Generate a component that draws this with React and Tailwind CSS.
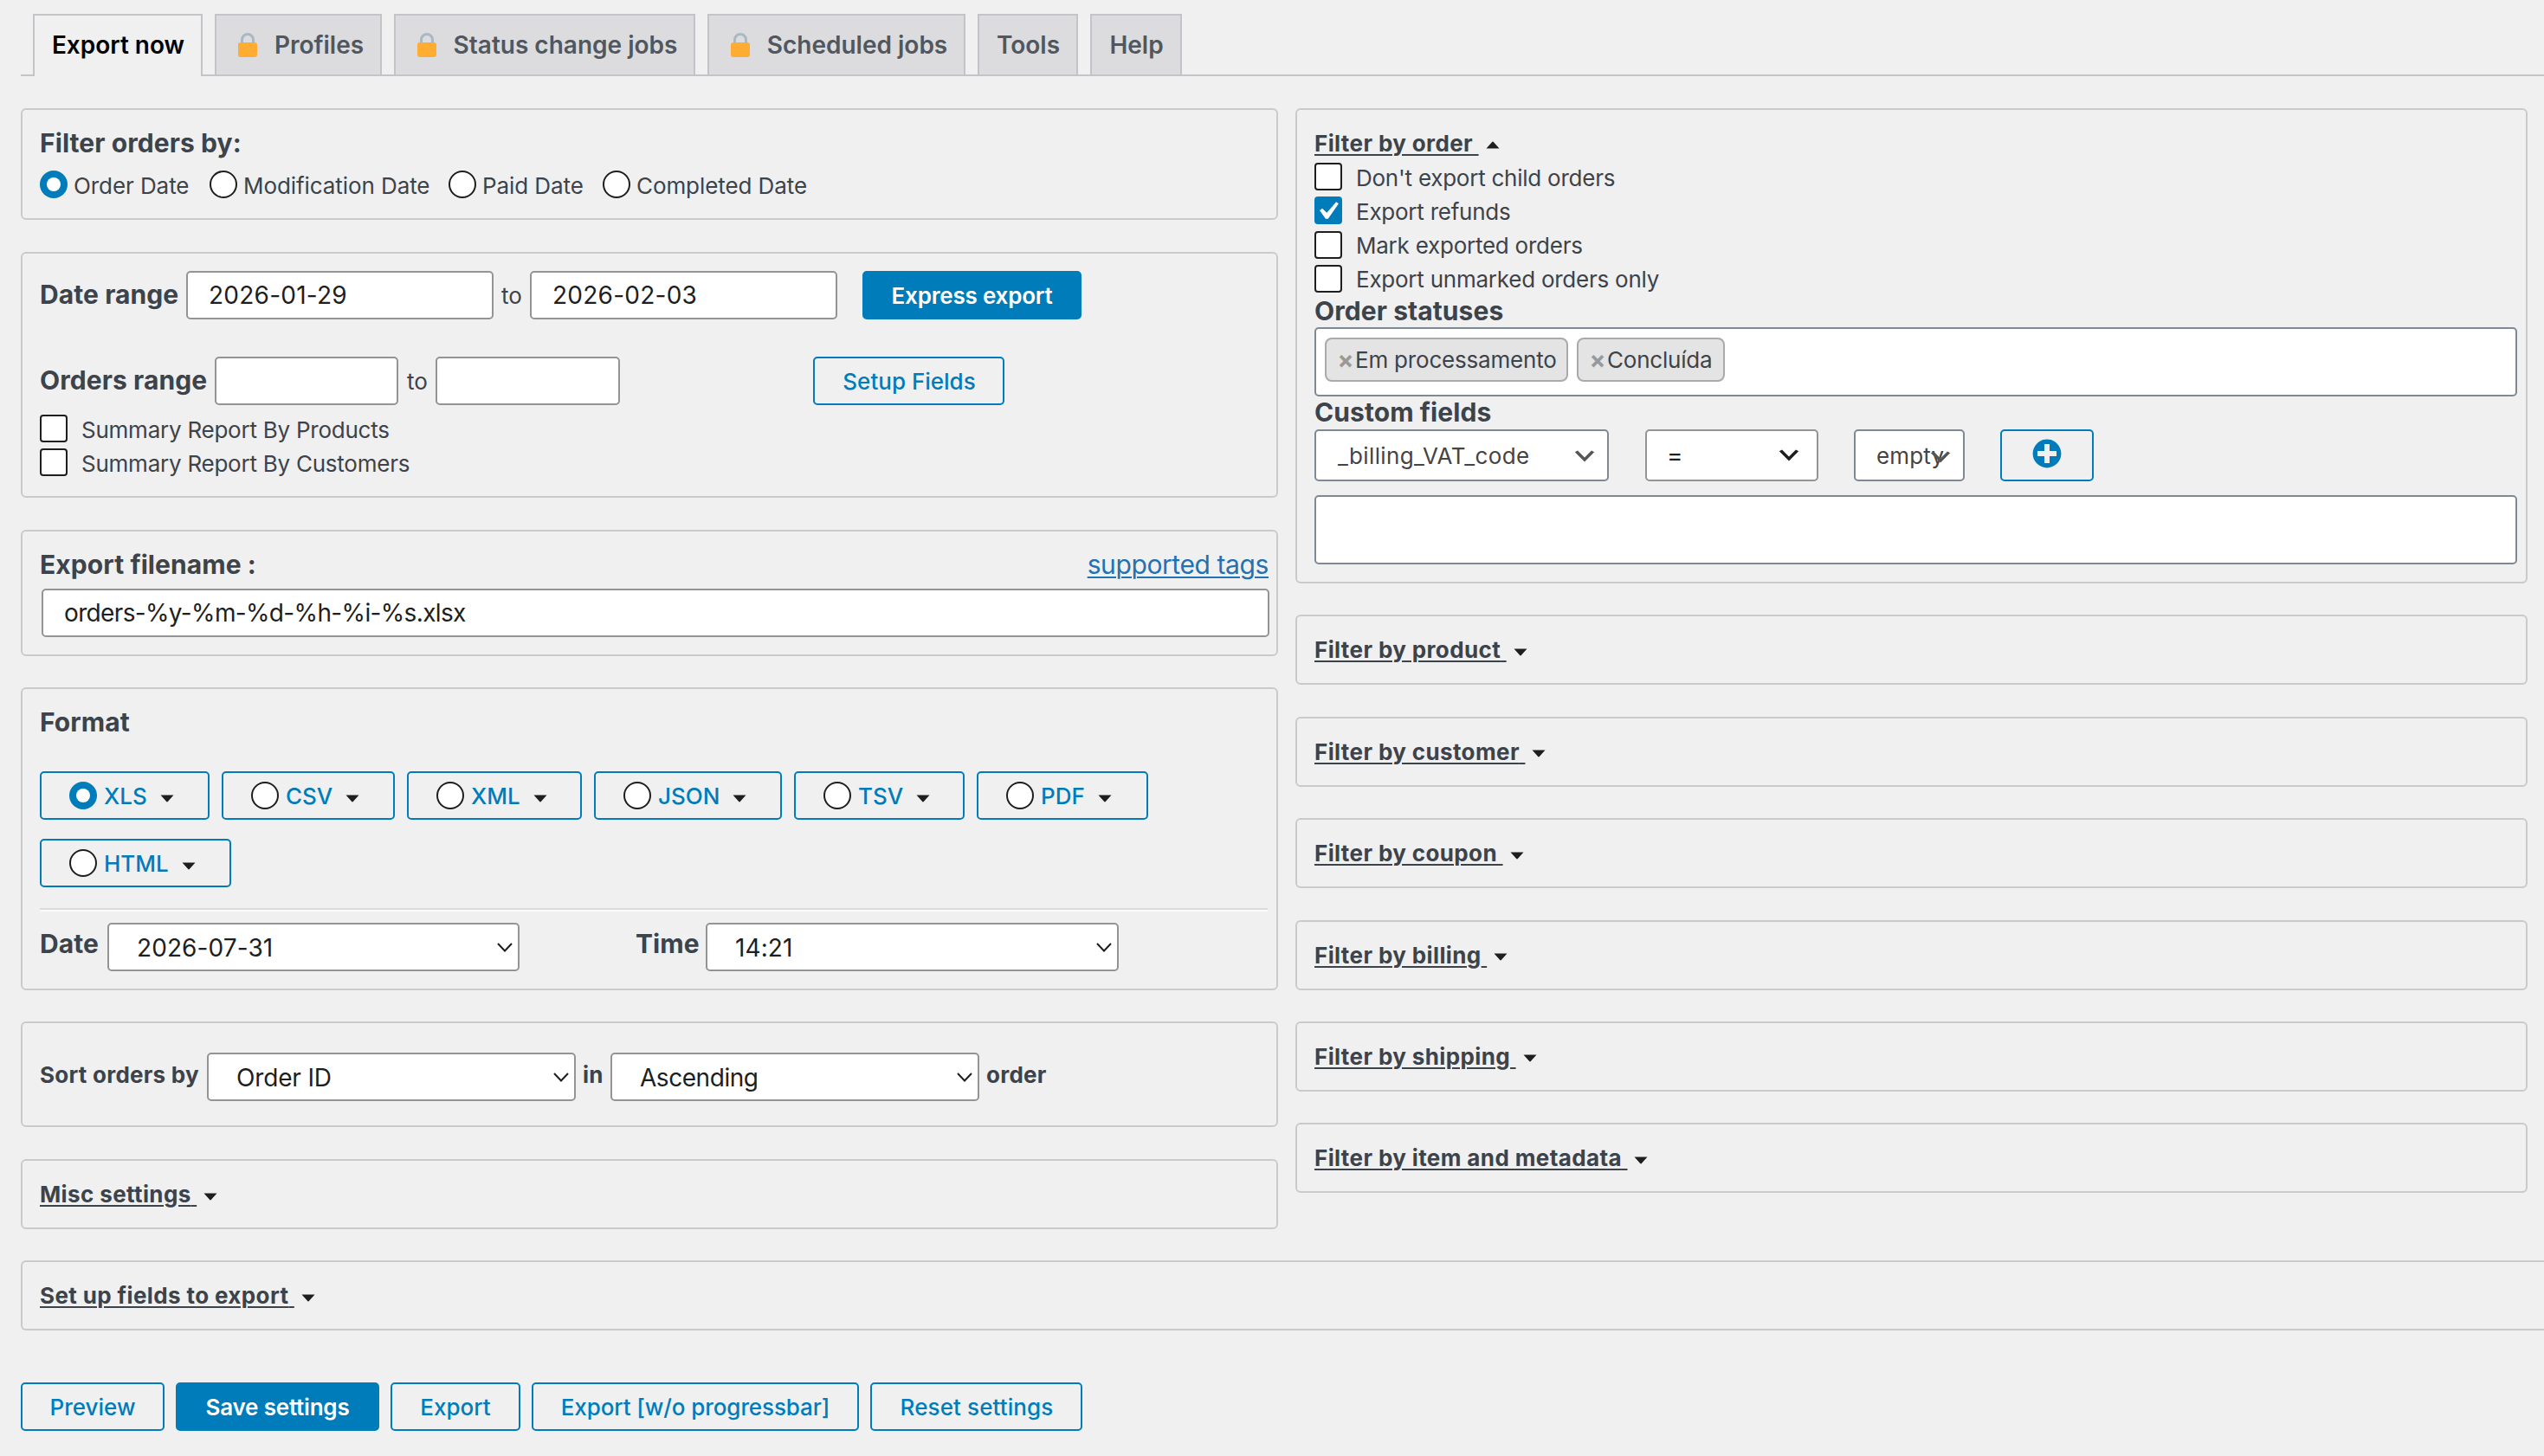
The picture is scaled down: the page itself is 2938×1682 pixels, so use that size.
import { useState } from 'react'
import clsx from 'clsx'

const tabs = [
  { name: 'Export now', width: 'w-[196px]' },
  { name: 'Profiles', width: 'w-[193px]', locked: true },
  { name: 'Status change jobs', width: 'w-[348px]', locked: true },
  { name: 'Scheduled jobs', width: 'w-[298px]', locked: true },
  { name: 'Tools', width: 'w-[116px]' },
  { name: 'Help', width: 'w-[106px]' },
]

const dateTypes = [
  { name: 'Order Date', width: 'w-[196px]' },
  { name: 'Modification Date', width: 'w-[276px]' },
  { name: 'Paid Date', width: 'w-[178px]' },
  { name: 'Completed Date', width: 'w-[260px]' },
]

const formats = [
  { name: 'XLS', width: 'w-[196px]' },
  { name: 'CSV', width: 'w-[200px]' },
  { name: 'XML', width: 'w-[202px]' },
  { name: 'JSON', width: 'w-[217px]' },
  { name: 'TSV', width: 'w-[197px]' },
  { name: 'PDF', width: 'w-[198px]' },
  { name: 'HTML', width: 'w-[221px]' },
]

const orderOptions = [
  "Don't export child orders",
  'Export refunds',
  'Mark exported orders',
  'Export unmarked orders only',
]

const filters = [
  'Filter by product',
  'Filter by customer',
  'Filter by coupon',
  'Filter by billing',
  'Filter by shipping',
  'Filter by item and metadata',
]

function Lock() {
  return (
    <svg className="mr-5 shrink-0" width="22" height="28" viewBox="0 0 22 28">
      <path d="M4.5 14V8a6.5 6.5 0 0 1 13 0v6" fill="none" stroke="#aab8c2" strokeWidth="3" />
      <rect y="11" width="22" height="17" rx="3" fill="#ffac33" />
    </svg>
  )
}

function Caret({ up, className }) {
  return (
    <svg className={clsx('shrink-0', className)} width="16" height="9" viewBox="0 0 16 9">
      <path d={up ? 'M0.5 8.5L7 1.2Q8 0 9 1.2L15.5 8.5z' : 'M0.5 0.5h15L9 7.8Q8 9 7 7.8z'} fill="#1e1e1e" />
    </svg>
  )
}

// thin arrow of the plain selects
function ThinChevron() {
  return (
    <svg width="18" height="11" viewBox="0 0 18 11">
      <path d="M1 1l8 8.5L17 1" fill="none" stroke="#1e1e1e" strokeWidth="2" />
    </svg>
  )
}

function ThickChevron({ className }) {
  return (
    <svg className={className} width="32" height="32" viewBox="0 0 20 20">
      <path d="M5 6l5 5 5-5 2 1-7 7-7-7 2-1z" fill="currentColor" />
    </svg>
  )
}

function Radio({ checked }) {
  return (
    <span
      className={clsx(
        'flex size-8 shrink-0 items-center justify-center rounded-full',
        checked ? 'bg-[#007cba]' : 'border-2 border-[#1e1e1e] bg-white'
      )}
    >
      {checked && <span className="size-4 rounded-full bg-white" />}
    </span>
  )
}

function Checkbox({ label, checked, onChange }) {
  return (
    <div className="flex h-8 items-center" onClick={onChange}>
      <span
        className={clsx(
          'size-8 shrink-0 overflow-hidden rounded-[4px]',
          checked ? 'bg-[#007cba]' : 'border-2 border-[#1e1e1e] bg-white'
        )}
      >
        {checked && (
          <svg width="32" height="32" viewBox="2.857 1.905 15.238 15.238">
            <path d="M14.83 4.89l1.34.94-5.81 8.38H9.02L5.78 9.67l1.34-1.25 2.57 2.4z" fill="#fff" />
          </svg>
        )}
      </span>
      <span className="ml-4 pt-[2px] tracking-[-0.24px]">{label}</span>
    </div>
  )
}

function Panel({ className, children }) {
  return <div className={clsx('rounded-[6px] border-2 border-[#cacaca]', className)}>{children}</div>
}

function Heading({ className, children }) {
  return <div className={clsx('text-[30px] font-bold tracking-[0.08px]', className)}>{children}</div>
}

function Toggle({ up, children }) {
  return (
    <div className="flex items-center">
      <span className="text-[26px] font-bold tracking-[0.38px] whitespace-pre underline decoration-2 underline-offset-[3px]">
        {children}{' '}
      </span>
      <Caret up={up} className="mt-[5px] ml-2" />
    </div>
  )
}

function Button({ primary, className, children }) {
  return (
    <button
      className={clsx(
        'flex items-center justify-center rounded-[5px] border-2 border-[#007cba] text-[26px] whitespace-nowrap',
        primary ? 'bg-[#007cba] font-semibold tracking-[-0.2px] text-white' : 'font-medium text-[#007cba]',
        className
      )}
    >
      {children}
    </button>
  )
}

function Input({ className, children }) {
  return (
    <div
      className={clsx(
        'flex h-14 items-center rounded-[5px] border-2 border-[#949494] bg-white pl-6 text-[28px] text-[#1e1e1e]',
        className
      )}
    >
      {children}
    </div>
  )
}

function Select({ className, children }) {
  return (
    <div
      className={clsx(
        'flex h-14 items-center justify-between rounded-[5px] border-2 border-[#949494] bg-white pr-[6px] pl-8 text-[28px] text-[#1e1e1e]',
        className
      )}
    >
      <span className="pt-[1px]">{children}</span>
      <ThinChevron />
    </div>
  )
}

function Tag({ className, children }) {
  return (
    <div className={clsx('flex h-[51px] items-center rounded-[8px] border-2 border-[#aaa] bg-[#e4e4e4] pl-[11px]', className)}>
      <span className="w-[22px] pt-[2px] text-center text-[28px] leading-none font-bold text-[#999]">×</span>
      <span className="tracking-[-0.2px]">{children}</span>
    </div>
  )
}

function App() {
  const [dateType, setDateType] = useState('Order Date')
  const [format, setFormat] = useState('XLS')
  const [checked, setChecked] = useState(['Export refunds'])

  const toggle = (name) => {
    setChecked(checked.includes(name) ? checked.filter((item) => item !== name) : [...checked, name])
  }

  return (
    <div className="h-[1682px] w-[2938px] overflow-hidden bg-[#f0f0f0] pl-6 font-[Inter,sans-serif] text-[26px] text-[#3c434a]">
      <div className="flex h-[88px] gap-[14px] border-b-2 border-[#c3c4c7] pt-4 pl-[14px]">
        {tabs.map((tab, index) => (
          <div
            key={tab.name}
            className={clsx(
              'flex items-center justify-center border-2 border-b-0 border-[#c3c4c7] text-[28px] font-semibold whitespace-nowrap',
              tab.width,
              index === 0 ? 'h-[72px] bg-[#f0f0f0] pb-[2px] text-black' : 'h-[70px] bg-[#dcdcde] text-[#50575e]',
              tab.locked ? 'pl-[6px]' : 'pl-[1px]'
            )}
          >
            {tab.locked && <Lock />}
            {tab.name}
          </div>
        ))}
      </div>

      <div className="mt-[37px] flex items-start">
        {/* left column */}
        <div className="w-[1452px]">
          <Panel className="h-[129px] pt-[18px] pl-5">
            <Heading className="leading-10">Filter orders by:</Heading>
            <div className="mt-3 flex h-8">
              {dateTypes.map((type) => (
                <div key={type.name} className={clsx('flex items-center', type.width)} onClick={() => setDateType(type.name)}>
                  <Radio checked={type.name === dateType} />
                  <span className="ml-[7px] pt-[3px] tracking-[-0.08px]">{type.name}</span>
                </div>
              ))}
            </div>
          </Panel>

          <Panel className="mt-[37px] h-[284px] pt-5 pl-5">
            <div className="flex items-center">
              <Heading className="w-[169px] pb-[1px]">Date range</Heading>
              <Input className="w-[355px] tracking-[0.25px]">2026-01-29</Input>
              <span className="w-[42px] pl-[9px]">to</span>
              <Input className="w-[355px] tracking-[0.25px]">2026-02-03</Input>
              <Button primary className="ml-[29px] h-14 w-[253px] pt-[1px]">Express export</Button>
            </div>
            <div className="mt-[43px] flex items-center">
              <Heading className="w-[202px] pb-[1px]">Orders range</Heading>
              <Input className="w-[212px]" />
              <span className="w-[43px] pt-[1px] pl-[10px]">to</span>
              <Input className="w-[213px]" />
              <Button className="ml-[223px] h-14 w-[221px] pt-[1px] pl-[1px]">Setup Fields</Button>
            </div>
            <div className="mt-[11px] flex flex-col gap-[7px]">
              {['Summary Report By Products', 'Summary Report By Customers'].map((name) => (
                <Checkbox key={name} label={name} checked={checked.includes(name)} onChange={() => toggle(name)} />
              ))}
            </div>
          </Panel>

          <Panel className="mt-[37px] h-[146px] pt-[18px] pr-[9px] pl-5">
            <div className="flex justify-between leading-10">
              <Heading>Export filename :</Heading>
              <a className="text-[30px] tracking-[-0.4px] text-[#2271b1] underline decoration-2 underline-offset-[3px]">
                supported tags
              </a>
            </div>
            <Input className="mt-2 -mr-[1px] ml-[2px] tracking-[-0.65px]">orders-%y-%m-%d-%h-%i-%s.xlsx</Input>
          </Panel>

          <Panel className="mt-9 h-[350px] pt-[18px] pr-[10px] pl-5">
            <Heading className="leading-10">Format</Heading>
            <div className="mt-[37px] flex flex-wrap gap-x-[14px] gap-y-[22px]">
              {formats.map(({ name, width }) => (
                <div
                  key={name}
                  className={clsx(
                    'flex h-14 items-center rounded-[5px] border-2 border-[#007cba] pl-8 font-medium text-[#007cba]',
                    width
                  )}
                  onClick={() => setFormat(name)}
                >
                  <Radio checked={name === format} />
                  <span className="ml-2 pt-[1px]">{name}</span>
                  <Caret className="mt-[6px] ml-[15px]" />
                </div>
              ))}
            </div>
            <div className="mt-6 h-1 border-t-2 border-[#dcdcdc] bg-[#fafafa]" />
            <div className="mt-[13px] flex items-center">
              <Heading className="w-[78px] pb-2 tracking-[0.3px]">Date</Heading>
              <Select className="w-[476px] tracking-[0.1px]">2026-07-31</Select>
              <Heading className="ml-[134px] w-[81px] pb-2">Time</Heading>
              <Select className="w-[477px] tracking-[0.1px]">14:21</Select>
            </div>
          </Panel>

          <Panel className="mt-9 h-[122px] pt-[34px] pl-5">
            <div className="flex items-center font-bold tracking-[0.25px]">
              <span className="w-[193px] pb-[5px]">Sort orders by</span>
              <Select className="w-[426px] font-normal tracking-[-0.15px]">Order ID</Select>
              <span className="w-[40px] pb-[5px] pl-2">in</span>
              <Select className="w-[426px] font-normal tracking-[-0.45px]">Ascending</Select>
              <span className="pb-[5px] pl-2">order</span>
            </div>
          </Panel>

          <Panel className="mt-[37px] flex h-[81px] pl-5">
            <Toggle>Misc settings</Toggle>
          </Panel>
        </div>

        {/* right column */}
        <div className="ml-5 w-[1423px]">
          <Panel className="h-[549px] pt-[22px] pr-[10px] pl-5">
            <div className="flex h-8">
              <Toggle up>Filter by order</Toggle>
            </div>
            <div className="mt-[7px] flex flex-col gap-[7.33px]">
              {orderOptions.map((name) => (
                <Checkbox key={name} label={name} checked={checked.includes(name)} onChange={() => toggle(name)} />
              ))}
            </div>
            <Heading className="h-10 pt-[1px] leading-10">Order statuses</Heading>
            <div className="flex h-20 gap-[10px] rounded-[5px] border-2 border-[#7e8993] bg-white p-[10px]">
              <Tag className="w-[281px]">Em processamento</Tag>
              <Tag className="w-[171px]">Concluída</Tag>
            </div>
            <Heading className="h-[38px] leading-[36px]">Custom fields</Heading>
            <div className="flex h-[60px]">
              <div className="flex w-[340px] items-center justify-between rounded-[5px] border-2 border-[#7e8993] bg-white pr-[10px] pl-[25px] tracking-[0.35px] text-[#444]">
                <span className="pt-[1px]">_billing_VAT_code</span>
                <ThickChevron className="mt-[3px] text-[#555]" />
              </div>
              <div className="ml-[42px] flex w-[200px] items-center justify-between rounded-[5px] border-2 border-[#949494] bg-white pr-4 pl-[23px] text-[28px] text-[#1e1e1e]">
                =
                <ThickChevron />
              </div>
              <div className="relative ml-[41px] flex w-[128px] items-center rounded-[5px] border-2 border-[#7e8993] bg-white pt-[1px] pl-6 tracking-[0.15px] text-[#444]">
                empty
                <ThickChevron className="absolute top-[14px] right-[10px] text-[#555]" />
              </div>
              <Button className="ml-[41px] w-[108px] pb-1">
                <svg width="40" height="40" viewBox="0 0 20 20">
                  <path
                    d="M15.8 4.2c3.2 3.21 3.2 8.39 0 11.6-3.21 3.2-8.39 3.2-11.6 0C1 12.59 1 7.41 4.2 4.2 7.41 1 12.59 1 15.8 4.2zm-4.3 11.3v-4h4v-3h-4v-4h-3v4h-4v3h4v4h3z"
                    fill="#007cba"
                  />
                </svg>
              </Button>
            </div>
            <div className="mt-4 h-20 rounded-[5px] border-2 border-[#7e8993] bg-white" />
          </Panel>

          {filters.map((name) => (
            <Panel key={name} className="mt-[36.4px] flex h-[81px] pl-5">
              <Toggle>{name}</Toggle>
            </Panel>
          ))}
        </div>
      </div>

      <Panel className="mt-9 flex h-[81px] rounded-r-none border-r-0 pl-5">
        <Toggle>Set up fields to export</Toggle>
      </Panel>

      <div className="mt-[60px] flex h-14 gap-[13px]">
        <Button className="w-[166px] pt-[1px]">Preview</Button>
        <Button primary className="w-[235px] pt-[1px]">Save settings</Button>
        <Button className="w-[150px] pt-[1px]">Export</Button>
        <Button className="w-[378px] pt-[1px] tracking-[-0.09px]">Export [w/o progressbar]</Button>
        <Button className="w-[245px] pt-[1px] pl-[1px] tracking-[0.1px]">Reset settings</Button>
      </div>
    </div>
  )
}

export default App
